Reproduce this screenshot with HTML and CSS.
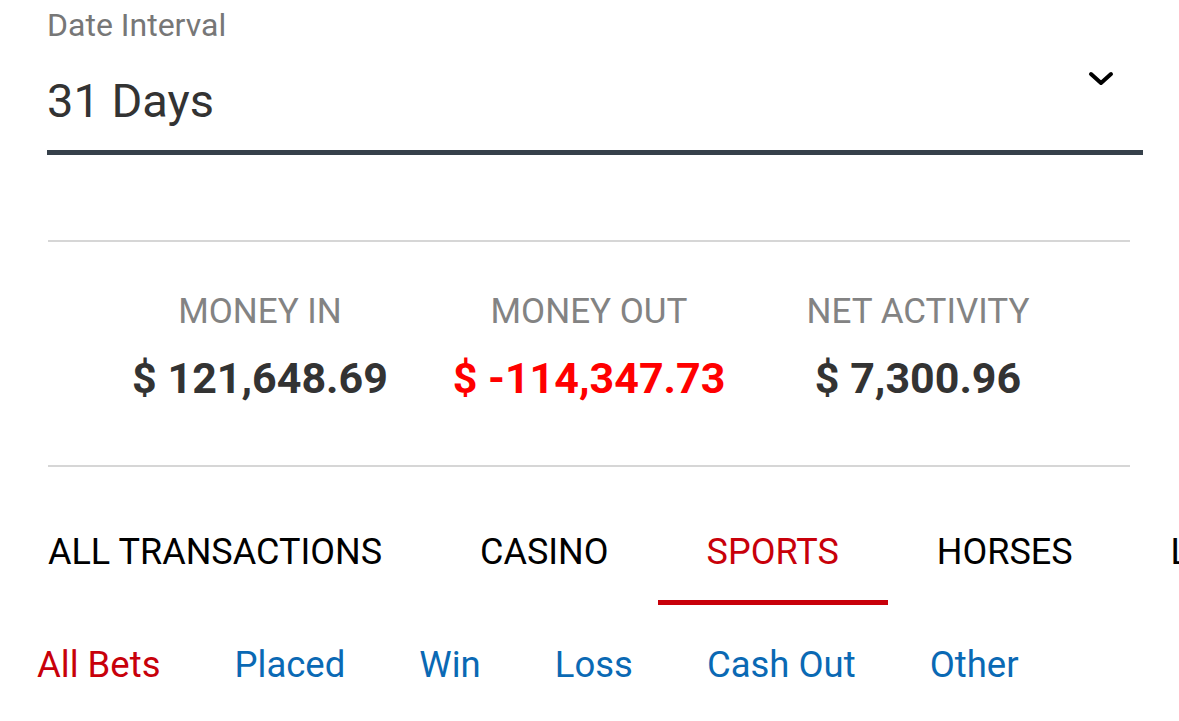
FILE: index.html
```html
<!DOCTYPE html>
<html lang="en">
<head>
    <meta charset="UTF-8">
    <meta name="viewport" content="width=device-width, initial-scale=1.0">
    <title>Account Activity</title>
    <link rel="stylesheet" href="styles.css">
</head>
<body>
    <div class="field">
        <label class="field-label" for="interval">Date Interval</label>
        <div class="select" id="interval">
            <span class="select-value">31 Days</span>
            <svg class="chevron" width="26" height="16" viewBox="0 0 26 16">
                <path d="M3 3 L13 12 L23 3" fill="none" stroke="#000" stroke-width="4" stroke-linecap="round" stroke-linejoin="round"/>
            </svg>
        </div>
    </div>

    <div class="summary">
        <div class="stat">
            <div class="stat-label">MONEY IN</div>
            <div class="stat-value">$ 121,648.69</div>
        </div>
        <div class="stat">
            <div class="stat-label">MONEY OUT</div>
            <div class="stat-value negative">$ -114,347.73</div>
        </div>
        <div class="stat">
            <div class="stat-label">NET ACTIVITY</div>
            <div class="stat-value">$ 7,300.96</div>
        </div>
    </div>

    <nav class="tabs">
        <a href="#" class="tab">ALL TRANSACTIONS</a>
        <a href="#" class="tab">CASINO</a>
        <a href="#" class="tab active">SPORTS</a>
        <a href="#" class="tab">HORSES</a>
        <a href="#" class="tab">LOTTERY</a>
    </nav>

    <div class="filters">
        <a href="#" class="filter active">All Bets</a>
        <a href="#" class="filter">Placed</a>
        <a href="#" class="filter">Win</a>
        <a href="#" class="filter">Loss</a>
        <a href="#" class="filter">Cash Out</a>
        <a href="#" class="filter">Other</a>
    </div>
</body>
</html>
```

FILE: styles.css
```css
body {
    margin: 0;
    font-family: Roboto, "Liberation Sans", sans-serif;
    background: #fff;
    color: #333;
    overflow: hidden;
}
a {
    text-decoration: none;
}
.field {
    margin: 0 36px 0 47px;
    padding-top: 5px;
}
.field-label {
    display: block;
    font-size: 32px;
    line-height: 40px;
    color: #777;
}
.select {
    display: flex;
    align-items: flex-start;
    justify-content: space-between;
    border-bottom: 5px solid #36404a;
    height: 110px;
    box-sizing: border-box;
}
.select-value {
    font-size: 47px;
    line-height: 56px;
    margin-top: 28px;
    color: #333;
}
.chevron {
    margin: 26px 29px 0 0;
}
.summary {
    margin: 85px 49px 0 48px;
    border-top: 2px solid #d6d6d6;
    border-bottom: 2px solid #d6d6d6;
    display: grid;
    grid-template-columns: repeat(3, 329px);
    justify-content: center;
    padding: 50px 0 63px;
}
.stat {
    text-align: center;
}
.stat-label {
    font-size: 35px;
    line-height: 40px;
    color: #838383;
}
.stat-value {
    font-size: 43px;
    line-height: 48px;
    font-weight: 700;
    margin-top: 22px;
    color: #333;
}
.stat-value.negative {
    color: #f00;
}
.tabs {
    display: flex;
    padding-top: 63px;
    white-space: nowrap;
}
.tab {
    padding: 0 49px 26px;
    font-size: 36px;
    line-height: 44px;
    color: #000;
    border-bottom: 5px solid transparent;
}
.tab:first-child {
    padding-left: 48px;
}
.tab.active {
    color: #c8000a;
    border-bottom-color: #c8000a;
}
.filters {
    display: flex;
    gap: 74px;
    padding: 38px 0 0 37px;
}
.filter {
    font-size: 36.5px;
    line-height: 44px;
    color: #0a69b4;
}
.filter.active {
    color: #c8000a;
}
```
